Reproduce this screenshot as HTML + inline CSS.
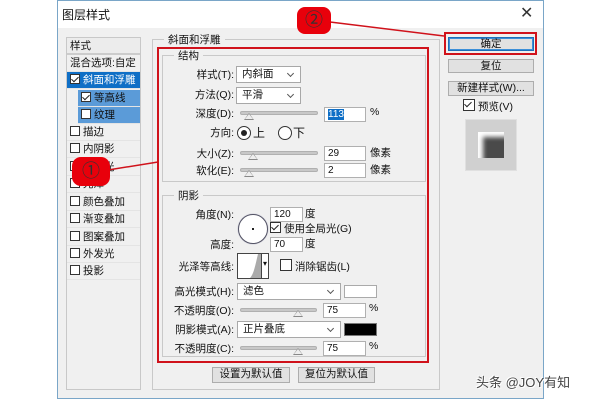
<!DOCTYPE html>
<html><head><meta charset="utf-8"><style>
*{box-sizing:border-box;margin:0;padding:0}
body{width:600px;height:400px;background:#fff;position:relative;overflow:hidden;font-family:"Liberation Sans","Noto Sans CJK SC",sans-serif;font-size:11px;color:#111}
.a{position:absolute}
.dlg{left:57px;top:0;width:487px;height:399px;background:#f0f0f0;border:1px solid #7aa6c8}
.title{left:58px;top:1px;width:485px;height:27px;background:#fff}
.lbl{position:absolute;white-space:nowrap;font-size:10.5px;margin-top:-2px}
.r{text-align:right}
.inp{position:absolute;background:#fff;border:1px solid #b0b0b0;height:15px;font-size:10px;padding-left:3px;line-height:13px}
.sel{position:absolute;background:#fff;border:1px solid #a8a8a8;height:17px;padding-left:5px;line-height:15px;font-size:10.5px}
.sel:after{content:"";position:absolute;right:7px;top:4px;width:4px;height:4px;border-right:1px solid #555;border-bottom:1px solid #555;transform:rotate(45deg)}
.sl{position:absolute;height:4px;background:#c8c8c8;border:1px solid #b0b0b0;border-radius:2px}
.th{position:absolute;width:0;height:0;border-left:5px solid transparent;border-right:5px solid transparent;border-bottom:7px solid #888}
.th:after{content:"";position:absolute;left:-4px;top:1px;border-left:4px solid transparent;border-right:4px solid transparent;border-bottom:5px solid #eee}
.btn{position:absolute;background:#e1e1e1;border:1px solid #adadad;text-align:center;line-height:13px;font-size:10.5px}
.cb{display:inline-block;width:10px;height:10px;border:1px solid #333;background:#fff;vertical-align:-1px;margin-right:3px;position:relative}
.ck:after{content:"";position:absolute;left:2px;top:0px;width:3px;height:6px;border-right:1.5px solid #222;border-bottom:1.5px solid #222;transform:rotate(45deg)}
.li{position:absolute;left:67px;width:73px;height:17px;line-height:16px;padding-left:3px;border-bottom:1px solid #e4e4e4;font-size:10.5px}
.grp{position:absolute;border:1px solid #c9c9c9}
.leg{position:absolute;background:#f0f0f0;padding:0 4px;font-size:10.5px}
</style></head><body>
<div class="a dlg"></div>
<div class="a title"></div>
<div class="lbl" style="left:62px;top:8px;font-size:12px">图层样式</div>
<div class="lbl" style="left:520px;top:5px;font-size:16px;color:#333">✕</div>

<div class="a" style="left:66px;top:37px;width:75px;height:353px;background:#f0f0f0;border:1px solid #c8c8c8"></div>
<div class="li" style="top:38px;border-bottom:2px solid #ccc;background:#ececec">样式</div>
<div class="li" style="top:55px">混合选项:自定</div>
<div class="li" style="top:72px;background:#0f6fc6;color:#fff"><span class="cb ck"></span>斜面和浮雕</div>
<div class="li" style="top:90px;left:78px;width:62px;background:#5b9bd8"><span class="cb ck"></span>等高线</div>
<div class="li" style="top:107px;left:78px;width:62px;background:#5b9bd8"><span class="cb"></span>纹理</div>
<div class="li" style="top:124px"><span class="cb"></span>描边</div>
<div class="li" style="top:141px"><span class="cb"></span>内阴影</div>
<div class="li" style="top:159px"><span class="cb"></span>内发光</div>
<div class="li" style="top:176px"><span class="cb"></span>光泽</div>
<div class="li" style="top:194px"><span class="cb"></span>颜色叠加</div>
<div class="li" style="top:211px"><span class="cb"></span>渐变叠加</div>
<div class="li" style="top:229px"><span class="cb"></span>图案叠加</div>
<div class="li" style="top:246px"><span class="cb"></span>外发光</div>
<div class="li" style="top:263px"><span class="cb"></span>投影</div>

<div class="grp" style="left:152px;top:39px;width:288px;height:351px"></div>
<div class="leg" style="left:164px;top:32px">斜面和浮雕</div>
<div class="grp" style="left:162px;top:55px;width:264px;height:127px"></div>
<div class="leg" style="left:174px;top:48px">结构</div>
<div class="grp" style="left:162px;top:195px;width:264px;height:162px"></div>
<div class="leg" style="left:174px;top:188px">阴影</div>
<div class="a" style="left:157px;top:47px;width:272px;height:316px;border:2px solid #d0121b"></div>

<div class="lbl r" style="left:170px;width:64px;top:69px">样式(T):</div>
<div class="sel" style="left:236px;top:66px;width:65px">内斜面</div>
<div class="lbl r" style="left:170px;width:64px;top:89px">方法(Q):</div>
<div class="sel" style="left:236px;top:87px;width:65px">平滑</div>
<div class="lbl r" style="left:170px;width:64px;top:108px">深度(D):</div>
<div class="sl" style="left:240px;top:111px;width:78px"></div><div class="th" style="left:244px;top:113px"></div>
<div class="inp" style="left:324px;top:107px;width:42px"><span style="background:#0f6fc6;color:#fff">113</span></div>
<div class="lbl" style="left:370px;top:108px">%</div>
<div class="lbl r" style="left:170px;width:64px;top:127px">方向:</div>
<div class="a" style="left:237px;top:126px;width:14px;height:14px;border:1px solid #333;border-radius:50%;background:#fff"></div>
<div class="a" style="left:241px;top:130px;width:6px;height:6px;border-radius:50%;background:#222"></div>
<div class="lbl" style="left:253px;top:126px;font-size:12px">上</div>
<div class="a" style="left:278px;top:126px;width:14px;height:14px;border:1px solid #333;border-radius:50%;background:#fff"></div>
<div class="lbl" style="left:293px;top:126px;font-size:12px">下</div>
<div class="lbl r" style="left:170px;width:64px;top:148px">大小(Z):</div>
<div class="sl" style="left:240px;top:151px;width:78px"></div><div class="th" style="left:248px;top:153px"></div>
<div class="inp" style="left:324px;top:146px;width:42px">29</div>
<div class="lbl" style="left:370px;top:147px">像素</div>
<div class="lbl r" style="left:170px;width:64px;top:165px">软化(E):</div>
<div class="sl" style="left:240px;top:168px;width:78px"></div><div class="th" style="left:244px;top:170px"></div>
<div class="inp" style="left:324px;top:163px;width:42px">2</div>
<div class="lbl" style="left:370px;top:164px">像素</div>

<div class="lbl r" style="left:170px;width:64px;top:209px">角度(N):</div>
<div class="a" style="left:238px;top:214px;width:30px;height:30px;border:1px solid #556;border-radius:50%;background:#fff;box-shadow:0 0 1px #88a"></div>
<div class="a" style="left:252px;top:228px;width:2px;height:2px;background:#222"></div>
<div class="inp" style="left:270px;top:207px;width:33px">120</div>
<div class="lbl" style="left:305px;top:208px">度</div>
<div class="lbl" style="left:270px;top:223px"><span class="cb ck" style="width:11px;height:11px"></span>使用全局光(G)</div>
<div class="lbl r" style="left:170px;width:64px;top:239px">高度:</div>
<div class="inp" style="left:270px;top:237px;width:33px">70</div>
<div class="lbl" style="left:305px;top:238px">度</div>
<div class="lbl r" style="left:160px;width:74px;top:261px">光泽等高线:</div>
<div class="a" style="left:237px;top:253px;width:32px;height:26px;background:#fff;border:1px solid #444"></div>
<svg class="a" style="left:238px;top:254px" width="24" height="24"><path d="M12 24 C16 20 18 8 20 0 L24 0 L24 24Z" fill="#aaa"/></svg>
<div class="a" style="left:261px;top:254px;width:1px;height:24px;background:#444"></div>
<div class="lbl" style="left:263px;top:261px;font-size:8px">▾</div>
<div class="lbl" style="left:280px;top:261px"><span class="cb" style="width:12px;height:12px"></span>消除锯齿(L)</div>
<div class="lbl r" style="left:160px;width:74px;top:286px">高光模式(H):</div>
<div class="sel" style="left:237px;top:283px;width:104px">滤色</div>
<div class="a" style="left:344px;top:285px;width:33px;height:13px;background:#fff;border:1px solid #aaa"></div>
<div class="lbl r" style="left:160px;width:74px;top:305px">不透明度(O):</div>
<div class="sl" style="left:240px;top:308px;width:77px"></div><div class="th" style="left:293px;top:310px"></div>
<div class="inp" style="left:323px;top:303px;width:43px">75</div>
<div class="lbl" style="left:369px;top:304px">%</div>
<div class="lbl r" style="left:160px;width:74px;top:324px">阴影模式(A):</div>
<div class="sel" style="left:237px;top:321px;width:104px">正片叠底</div>
<div class="a" style="left:344px;top:323px;width:33px;height:13px;background:#000;border:1px solid #777"></div>
<div class="lbl r" style="left:160px;width:74px;top:343px">不透明度(C):</div>
<div class="sl" style="left:240px;top:346px;width:77px"></div><div class="th" style="left:293px;top:348px"></div>
<div class="inp" style="left:323px;top:341px;width:43px">75</div>
<div class="lbl" style="left:369px;top:342px">%</div>

<div class="btn" style="left:212px;top:367px;width:78px;height:16px">设置为默认值</div>
<div class="btn" style="left:298px;top:367px;width:77px;height:16px">复位为默认值</div>

<div class="a" style="left:444px;top:32px;width:93px;height:23px;border:2px solid #d0121b"></div>
<div class="btn" style="left:448px;top:37px;width:86px;height:14px;border:1px solid #1e6fb8;box-shadow:inset 0 0 0 1px #3c8fd8">确定</div>
<div class="btn" style="left:448px;top:59px;width:86px;height:14px">复位</div>
<div class="btn" style="left:448px;top:81px;width:86px;height:15px">新建样式(W)...</div>
<div class="lbl" style="left:463px;top:101px"><span class="cb ck" style="width:12px;height:12px"></span>预览(V)</div>
<div class="a" style="left:465px;top:119px;width:52px;height:52px;background:#d0d0d0;border:1px solid #e0e0e0"></div>
<div class="a" style="left:478px;top:132px;width:26px;height:26px;background:#4a4a4a;box-shadow:inset 5px 5px 5px #fff"></div>

<svg class="a" style="left:0;top:0" width="600" height="400"><g stroke="#d0121b" stroke-width="1.5"><line x1="330" y1="22" x2="444" y2="36"/><line x1="108" y1="170" x2="158" y2="162"/></g></svg>
<div class="a" style="left:297px;top:7px;width:34px;height:27px;background:#e8000b;border-radius:8px;color:#333;font-size:18px;text-align:center;line-height:26px">②</div>
<div class="a" style="left:72px;top:157px;width:38px;height:29px;background:#e8000b;border-radius:9px;color:#333;font-size:18px;text-align:center;line-height:28px">①</div>
<div class="lbl" style="left:476px;top:374px;font-size:13px;color:#444;text-shadow:1px 1px 0 #fff,-1px -1px 0 #fff">头条 @JOY有知</div>
</body></html>
